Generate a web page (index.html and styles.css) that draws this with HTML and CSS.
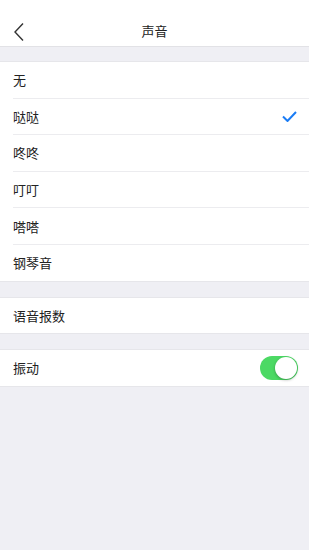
FILE: index.html
```html
<!DOCTYPE html>
<html lang="zh">
<head>
<meta charset="utf-8">
<link rel="stylesheet" href="styles.css">
</head>
<body>
<header class="nav">
  <span class="back"><svg width="12" height="20" viewBox="0 0 12 20"><path d="M10 1.5 L2 10 L10 18.5" fill="none" stroke="#333" stroke-width="1.4"/></svg></span>
  <h1 class="title">声音</h1>
</header>
<section class="group first">
  <div class="row"><span>无</span></div>
  <div class="row"><span>哒哒</span><svg class="check" width="15" height="11" viewBox="0 0 15 11"><path d="M1 5.5 L5.5 10 L14 1" fill="none" stroke="#1a7cf5" stroke-width="2"/></svg></div>
  <div class="row"><span>咚咚</span></div>
  <div class="row"><span>叮叮</span></div>
  <div class="row"><span>嗒嗒</span></div>
  <div class="row"><span>钢琴音</span></div>
</section>
<section class="group">
  <div class="row"><span>语音报数</span></div>
</section>
<section class="group">
  <div class="row"><span>振动</span><span class="switch"><span class="knob"></span></span></div>
</section>
</body>
</html>
```
FILE: styles.css
```css
html, body {
  margin: 0;
  padding: 0;
  background: #efeff4;
  font-family: "Noto Sans CJK SC", "Noto Sans", sans-serif;
  color: #222;
}
.nav {
  height: 47px;
  background: #fff;
  border-bottom: 1px solid #e2e2e6;
  position: relative;
  display: flex;
  align-items: center;
  justify-content: center;
  box-sizing: border-box;
  padding-top: 14px;
}
.back {
  position: absolute;
  left: 13px;
  top: 22px;
  line-height: 0;
}
.title {
  margin: 0;
  font-size: 13px;
  font-weight: normal;
  color: #222;
}
.group {
  background: #fff;
  margin-top: 15px;
  border-top: 1px solid #e6e6ea;
  border-bottom: 1px solid #e6e6ea;
}
.group.first {
  margin-top: 14px;
}
.row {
  height: 35.6px;
  margin-left: 13px;
  padding-right: 11px;
  display: flex;
  align-items: center;
  justify-content: space-between;
  font-size: 13px;
  border-bottom: 1px solid #ececef;
}
.row:last-child {
  border-bottom: none;
}
.check {
  margin-right: 1px;
}
.switch {
  width: 38px;
  height: 24px;
  border-radius: 12px;
  background: #4cd964;
  position: relative;
  box-sizing: border-box;
}
.knob {
  position: absolute;
  right: 1px;
  top: 1px;
  width: 22px;
  height: 22px;
  border-radius: 50%;
  background: #fff;
  box-shadow: 0 1px 3px rgba(0,0,0,0.3);
}
```
